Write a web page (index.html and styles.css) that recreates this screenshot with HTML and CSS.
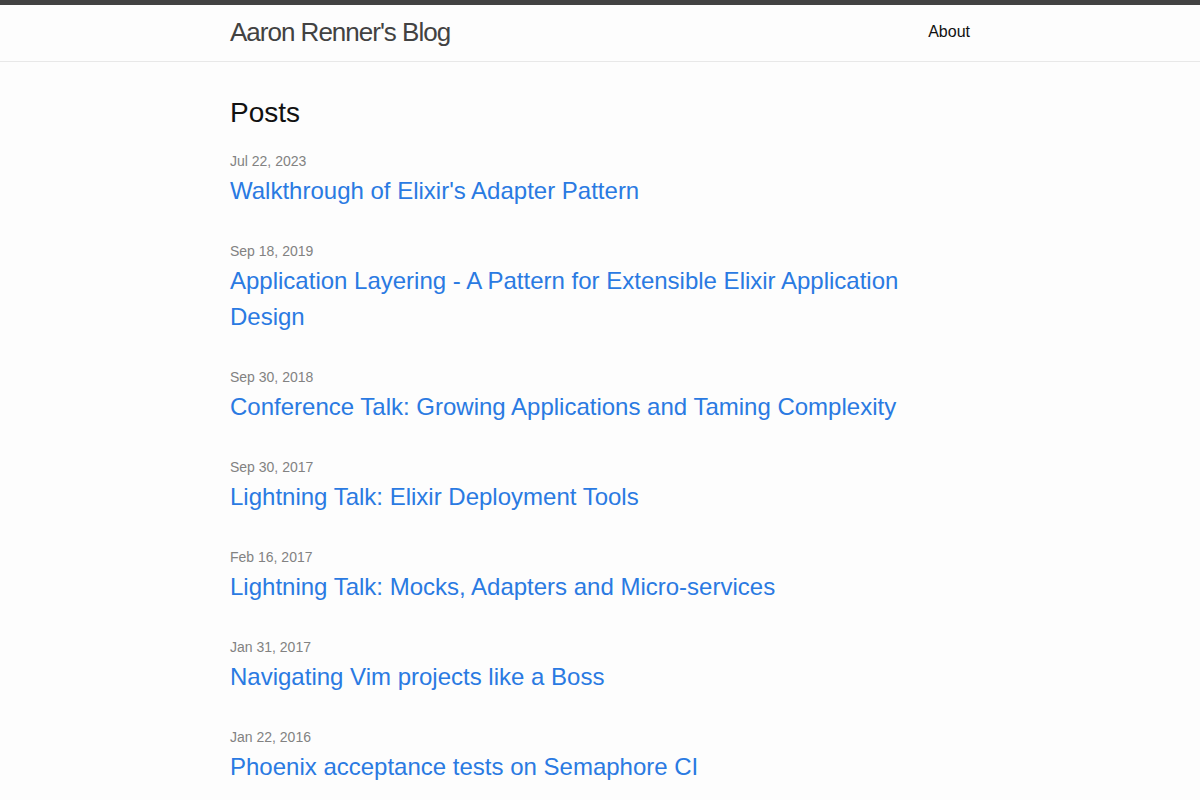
FILE: index.html
```html
<!DOCTYPE html>
<html lang="en">
<head>
    <meta charset="UTF-8">
    <meta name="viewport" content="width=device-width, initial-scale=1.0">
    <title>Aaron Renner's Blog</title>
    <link rel="stylesheet" href="styles.css">
</head>
<body>
    <header class="site-header">
        <div class="wrapper header-inner">
            <a class="site-title" href="#">Aaron Renner's Blog</a>
            <nav class="site-nav">
                <a class="page-link" href="#">About</a>
            </nav>
        </div>
    </header>

    <main class="page-content">
        <div class="wrapper">
            <h2 class="post-list-heading">Posts</h2>
            <ul class="post-list">
                <li>
                    <span class="post-meta">Jul 22, 2023</span>
                    <h3><a class="post-link" href="#">Walkthrough of Elixir's Adapter Pattern</a></h3>
                </li>
                <li>
                    <span class="post-meta">Sep 18, 2019</span>
                    <h3><a class="post-link" href="#">Application Layering - A Pattern for Extensible Elixir Application Design</a></h3>
                </li>
                <li>
                    <span class="post-meta">Sep 30, 2018</span>
                    <h3><a class="post-link" href="#">Conference Talk: Growing Applications and Taming Complexity</a></h3>
                </li>
                <li>
                    <span class="post-meta">Sep 30, 2017</span>
                    <h3><a class="post-link" href="#">Lightning Talk: Elixir Deployment Tools</a></h3>
                </li>
                <li>
                    <span class="post-meta">Feb 16, 2017</span>
                    <h3><a class="post-link" href="#">Lightning Talk: Mocks, Adapters and Micro-services</a></h3>
                </li>
                <li>
                    <span class="post-meta">Jan 31, 2017</span>
                    <h3><a class="post-link" href="#">Navigating Vim projects like a Boss</a></h3>
                </li>
                <li>
                    <span class="post-meta">Jan 22, 2016</span>
                    <h3><a class="post-link" href="#">Phoenix acceptance tests on Semaphore CI</a></h3>
                </li>
            </ul>
        </div>
    </main>
</body>
</html>
```

FILE: styles.css
```css
body {
    margin: 0;
    font: 400 16px/1.5 "Liberation Sans", Arial, sans-serif;
    color: #111;
    background-color: #fdfdfd;
}
a {
    text-decoration: none;
}
.wrapper {
    max-width: 740px;
    margin: 0 auto;
    padding: 0 30px;
}
.site-header {
    border-top: 5px solid #424242;
    border-bottom: 1px solid #e8e8e8;
    min-height: 55.95px;
}
.header-inner {
    display: flex;
    justify-content: space-between;
    align-items: flex-start;
}
.site-title {
    font-size: 26px;
    font-weight: 300;
    line-height: 54px;
    letter-spacing: -1px;
    color: #424242;
}
.site-nav {
    line-height: 54px;
}
.page-link {
    color: #111;
    line-height: 1.5;
}
.page-content {
    padding: 30px 0;
}
.post-list-heading {
    font-size: 28px;
    font-weight: 400;
    margin: 0 0 15px;
}
.post-list {
    list-style: none;
    margin: 0;
    padding: 0;
}
.post-list li {
    margin-bottom: 30px;
}
.post-list h3 {
    margin: 0;
    font-weight: 400;
}
.post-meta {
    font-size: 14px;
    color: #828282;
}
.post-link {
    display: block;
    font-size: 24px;
    color: #2a7ae2;
}
```
